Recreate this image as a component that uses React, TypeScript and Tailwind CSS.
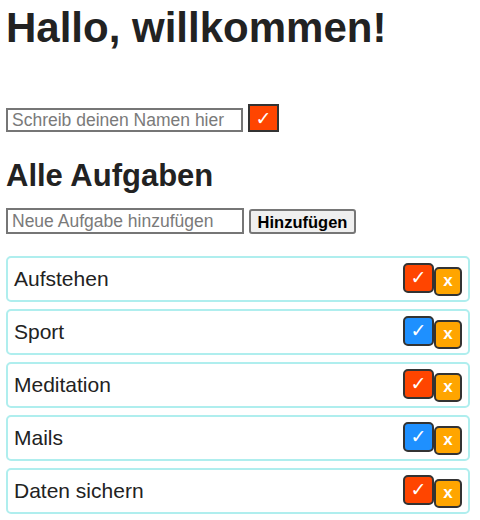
import { useState } from 'react';

type Task = { id: number; title: string; done: boolean };

const initialTasks: Task[] = [
  { id: 1, title: 'Aufstehen', done: false },
  { id: 2, title: 'Sport', done: true },
  { id: 3, title: 'Meditation', done: false },
  { id: 4, title: 'Mails', done: true },
  { id: 5, title: 'Daten sichern', done: false },
];

export default function App() {
  const [tasks, setTasks] = useState<Task[]>(initialTasks);
  const [name, setName] = useState('');
  const [newTask, setNewTask] = useState('');

  const addTask = () => {
    if (!newTask.trim()) return;
    setTasks([...tasks, { id: Date.now(), title: newTask.trim(), done: false }]);
    setNewTask('');
  };

  const toggle = (id: number) =>
    setTasks(tasks.map(t => (t.id === id ? { ...t, done: !t.done } : t)));

  const remove = (id: number) => setTasks(tasks.filter(t => t.id !== id));

  return (
    <div className="px-[6px] font-['Liberation_Sans',Arial,sans-serif] text-[#222]">
      <h1 className="mt-[4px] text-[42px] leading-[48px] font-bold">
        {name ? `Hallo, ${name}!` : 'Hallo, willkommen!'}
      </h1>

      <div className="mt-[52px] flex items-end gap-[5px]">
        <input
          value={name}
          onChange={e => setName(e.target.value)}
          placeholder="Schreib deinen Namen hier"
          className="w-[237px] h-[24px] border-2 border-[#767676] pl-[4px] pr-[3px] text-[17.5px] leading-[20px] placeholder:text-[#7a7a7a] outline-none"
        />
        <button className="w-[31px] h-[28px] bg-[#ff4500] border-2 border-[#333] flex items-center justify-center text-white text-[19px] leading-none font-['DejaVu_Sans',sans-serif]">
          ✓
        </button>
      </div>

      <h2 className="mt-[26px] text-[31px] leading-[36px] font-bold">Alle Aufgaben</h2>

      <div className="mt-[14px] flex items-end gap-[5px]">
        <input
          value={newTask}
          onChange={e => setNewTask(e.target.value)}
          onKeyDown={e => e.key === 'Enter' && addTask()}
          placeholder="Neue Aufgabe hinzufügen"
          className="w-[238px] h-[26px] border-2 border-[#767676] pl-[4px] pr-[3px] text-[17.5px] leading-[20px] placeholder:text-[#7a7a7a] outline-none"
        />
        <button
          onClick={addTask}
          className="w-[107px] h-[25px] bg-[#efefef] border-2 border-[#767676] rounded-[3px] text-[16.5px] leading-[20px] font-bold text-black"
        >
          Hinzufügen
        </button>
      </div>

      <ul className="mt-[22px] flex flex-col gap-[7px] w-[464px]">
        {tasks.map(task => (
          <li
            key={task.id}
            className="h-[46px] border-2 border-[#afeeee] rounded-[5px] pl-[6px] pr-[6px] flex items-center justify-between"
          >
            <span className="text-[21px] leading-[24px]">{task.title}</span>
            <div className="flex items-start">
              <button
                onClick={() => toggle(task.id)}
                className={`w-[31px] h-[30px] border-2 border-[#333] rounded-[5px] flex items-center justify-center text-white text-[19px] leading-none font-['DejaVu_Sans',sans-serif] ${
                  task.done ? 'bg-[#1e90ff]' : 'bg-[#ff4500]'
                }`}
              >
                ✓
              </button>
              <button
                onClick={() => remove(task.id)}
                className="mt-[4px] w-[28px] h-[29px] bg-[#ffa500] border-2 border-[#333] rounded-[5px] flex items-center justify-center text-white text-[17px] font-bold leading-none pb-[2px]"
              >
                x
              </button>
            </div>
          </li>
        ))}
      </ul>
    </div>
  );
}
